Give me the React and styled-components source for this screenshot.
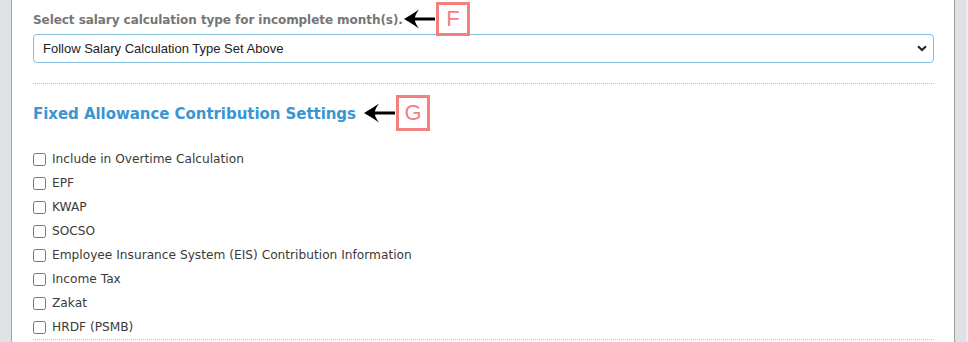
import React from "react";
import styled, { createGlobalStyle } from "styled-components";

const GlobalStyle = createGlobalStyle`
  html, body { margin: 0; padding: 0; background: #ffffff; }
  * { box-sizing: border-box; }
`;

const Page = styled.div`
  display: flex;
  width: 968px;
  height: 342px;
  overflow: hidden;
  background: #fff;
`;

const LeftRail = styled.div`
  width: 12px;
  flex: none;
  background: #dfe2e5;
  border-right: 1px solid #a3a3a3;
`;

const RightRail = styled.div`
  width: 14px;
  flex: none;
  background: #dfe2e5;
  border-left: 1px solid #9e9e9e;
  border-right: 2px solid #eceef0;
`;

const Main = styled.div`
  position: relative;
  flex: 1;
  padding: 12px 20px 0 21px;
  font-family: "DejaVu Sans", Verdana, sans-serif;
`;

const FieldLabel = styled.div`
  font-size: 12px;
  font-weight: bold;
  line-height: 16px;
  color: #767676;
  letter-spacing: -0.06px;
`;

const SelectWrap = styled.div`
  position: relative;
  margin-top: 6px;
`;

const Select = styled.select`
  appearance: none;
  -webkit-appearance: none;
  width: 100%;
  height: 29px;
  padding: 0 30px 0 9px;
  border: 1px solid #86bedd;
  border-radius: 4px;
  background: #fff;
  font-family: "Liberation Sans", Arial, sans-serif;
  font-size: 13px;
  color: #222;
  outline: none;
`;

const Chevron = styled.svg`
  position: absolute;
  right: 7px;
  top: 11px;
  pointer-events: none;
`;

const Divider = styled.hr`
  margin: ${(p) => p.$top || 0}px 0 0;
  border: 0;
  border-top: 1px dotted #bdbdbd;
  height: 0;
`;

const SectionTitle = styled.h3`
  margin: 20px 0 0;
  font-size: 15px;
  font-weight: bold;
  line-height: 20px;
  color: #3a96d2;
  letter-spacing: -0.05px;
`;

const CheckList = styled.div`
  margin-top: 23px;
  display: flex;
  flex-direction: column;
`;

const CheckRow = styled.label`
  display: flex;
  align-items: center;
  gap: 6px;
  height: 24px;
  font-size: 12.2px;
  color: #3a3a3a;
`;

const Box = styled.input`
  margin: 0;
  width: 13px;
  height: 13px;
  flex: none;
`;

const Callout = styled.div`
  position: absolute;
  left: ${(p) => p.$x}px;
  top: ${(p) => p.$y}px;
  display: flex;
  align-items: center;
  gap: 1px;
`;

const Tag = styled.div`
  width: ${(p) => p.$w}px;
  height: ${(p) => p.$h}px;
  border: 3px solid #f37f7f;
  background: #fff;
  color: #f37f7f;
  font-family: "Liberation Sans", Arial, sans-serif;
  font-size: 22px;
  display: flex;
  align-items: center;
  justify-content: center;
`;

const Arrow = () => (
  <svg width="31" height="20" viewBox="0 0 31 20">
    <path
      d="M0 10 Q8 5.5 15 0.5 Q11 6 11 8.6 L31 8.4 L31 11.4 L11 11.4 Q11 14 15 19.5 Q8 14.5 0 10 Z"
      fill="#000"
    />
  </svg>
);

const items = [
  "Include in Overtime Calculation",
  "EPF",
  "KWAP",
  "SOCSO",
  "Employee Insurance System (EIS) Contribution Information",
  "Income Tax",
  "Zakat",
  "HRDF (PSMB)",
];

export default function App() {
  return (
    <>
      <GlobalStyle />
      <Page>
        <LeftRail />
        <Main>
          <FieldLabel>Select salary calculation type for incomplete month(s).</FieldLabel>
          <SelectWrap>
            <Select defaultValue="follow">
              <option value="follow">Follow Salary Calculation Type Set Above</option>
            </Select>
            <Chevron width="10" height="7" viewBox="0 0 10 7">
              <path d="M1 1.2 L5 5 L9 1.2" fill="none" stroke="#222" strokeWidth="2" />
            </Chevron>
          </SelectWrap>
          <Divider $top={20} />
          <SectionTitle>Fixed Allowance Contribution Settings</SectionTitle>
          <CheckList>
            {items.map((t) => (
              <CheckRow key={t}>
                <Box type="checkbox" />
                {t}
              </CheckRow>
            ))}
          </CheckList>
          <Divider $top={0} />
          <Callout $x={392} $y={2}>
            <Arrow />
            <Tag $w={34} $h={34}>F</Tag>
          </Callout>
          <Callout $x={352} $y={95}>
            <Arrow />
            <Tag $w={34} $h={36}>G</Tag>
          </Callout>
        </Main>
        <RightRail />
      </Page>
    </>
  );
}
